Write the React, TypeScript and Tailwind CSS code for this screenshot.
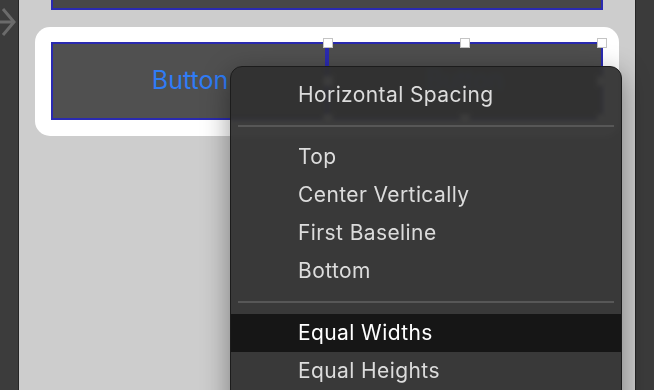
import React from "react";

const items: (string | null)[] = [
  "Horizontal Spacing",
  null,
  "Top",
  "Center Vertically",
  "First Baseline",
  "Bottom",
  null,
  "Equal Widths",
  "Equal Heights",
];

function Handle({ cls }: { cls: string }) {
  return (
    <div
      className={`absolute w-[10px] h-[10px] bg-white border border-[#c4c4c4] ${cls}`}
    />
  );
}

export default function App() {
  return (
    <div
      className="w-[654px] h-[390px] overflow-hidden flex relative"
      style={{ fontFamily: "Inter, 'Liberation Sans', sans-serif" }}
    >
      {/* left strip */}
      <div className="w-[19px] shrink-0 bg-[#3c3c3c] border-r border-[#262626] relative overflow-hidden">
        <svg width="19" height="40" viewBox="0 0 19 40" className="absolute left-0 top-0">
          <path d="M-4 22 H12 M3 9 L14 22 L3 35" stroke="#6b6b6b" strokeWidth="3" fill="none" />
        </svg>
      </div>

      {/* canvas */}
      <div className="flex-1 bg-[#cdcdcd] flex flex-col">
        <div className="ml-[32px] w-[552px] h-[40px] mt-[-30px] bg-[#474747] border-2 border-[#2a2ab0]" />
        <div className="ml-[16px] w-[584px] h-[109px] mt-[17px] bg-white rounded-[15px] pt-[15px] pl-[16px] flex">
          <div className="w-[276px] h-[78px] bg-[#505050] border-2 border-[#2a2ab0] flex items-center justify-center">
            <span className="text-[25px] text-[#2f7cf6] pl-[2px]">Button</span>
          </div>
          <div className="w-[276px] h-[78px] bg-[#4e4e4e] border-2 border-[#2a2ab0] flex items-center justify-center relative">
            <span className="text-[25px] text-[#2f7cf6] opacity-60">Button</span>
            <Handle cls="left-[-6px] top-[-6px]" />
            <Handle cls="left-[131px] top-[-6px]" />
            <Handle cls="right-[-6px] top-[-6px]" />
            <Handle cls="left-[-6px] top-[32px]" />
            <Handle cls="right-[-6px] top-[32px]" />
            <Handle cls="left-[-6px] bottom-[-6px]" />
            <Handle cls="left-[131px] bottom-[-6px]" />
            <Handle cls="right-[-6px] bottom-[-6px]" />
          </div>
        </div>
      </div>

      {/* right strip */}
      <div className="w-[19px] shrink-0 bg-[#3b3b3b] border-l border-[#262626]" />

      {/* menu */}
      <div className="absolute left-[230px] top-[66px] w-[392px] h-[360px] rounded-[12px] border border-[#1c1c1c] bg-[rgba(48,48,48,0.94)] backdrop-blur-[2px] shadow-[0_8px_28px_rgba(0,0,0,0.4)] pt-[9px]">
        {items.map((it, i) =>
          it === null ? (
            <div key={i} className="h-[24px] flex items-center px-[7px]">
              <div className="h-[2px] w-full bg-[#575757]" />
            </div>
          ) : (
            <div
              key={i}
              className={`h-[38px] flex items-center pl-[67px] text-[21px] tracking-[0.4px] ${
                it === "Equal Widths" ? "bg-[#161616] text-white" : "text-[#dcdcdc]"
              }`}
            >
              {it}
            </div>
          )
        )}
      </div>
    </div>
  );
}
